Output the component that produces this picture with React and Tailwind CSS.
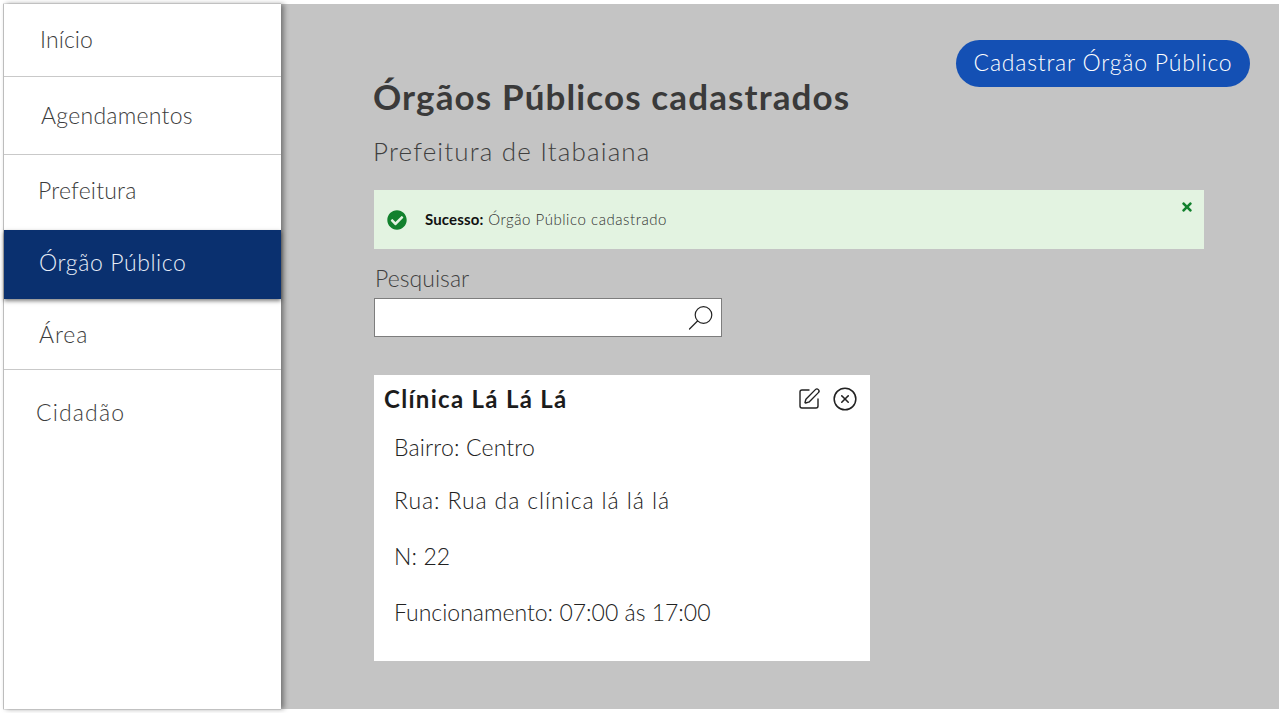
import { CircleX, SquarePen } from "lucide-react";
import { FaCheckCircle, FaTimes } from "react-icons/fa";

const font = "font-['Lato','Noto_Sans',sans-serif]";

function NavItem({ label, className = "" }) {
  return (
    <div className={`flex items-center border-b border-[#c9c9c9] text-[23px] font-light text-[#3c3c3c] ${className}`}>
      {label}
    </div>
  );
}

function CardLine({ children, className = "" }) {
  return <p className={`text-[23px] font-light leading-[28px] text-[#222] ${className}`}>{children}</p>;
}

function SearchMark() {
  return (
    <svg viewBox="0 0 26 26" className="h-[26px] w-[26px] text-[#222]" fill="none" stroke="currentColor" strokeWidth="1.2" strokeLinecap="round">
      <circle cx="15.5" cy="10" r="8.3" />
      <path d="M9.5 16 1.5 24" />
    </svg>
  );
}

export default function App() {
  return (
    <div className={`flex h-[713px] w-[1279px] overflow-hidden bg-white pb-[4px] pt-[4px] pl-[3px] ${font}`}>
      {/* Sidebar */}
      <aside className="relative z-10 flex w-[278px] shrink-0 flex-col border-l border-[#bdbdbd] bg-white shadow-[3px_0_5px_rgba(0,0,0,0.4),0_-1px_0_#e8e8e8,0_1px_0_#e8e8e8]">
        <NavItem label="Início" className="h-[73px] pl-[36px] pb-[1px] tracking-[0.1px]" />
        <NavItem label="Agendamentos" className="h-[78px] pl-[37px] pb-[1px] tracking-[0.27px]" />
        <div className="flex h-[75px] items-center pl-[34px] pb-[5px] text-[23px] font-light tracking-[0.2px] text-[#3c3c3c]">Prefeitura</div>
        <div className="z-10 flex h-[69px] items-center bg-[#0a306f] pl-[35px] pb-[4px] text-[23px] font-light tracking-[0.6px] text-[#e8eef8] shadow-[0_2px_4px_rgba(0,0,0,0.5)]">
          Órgão Público
        </div>
        <NavItem label="Área" className="h-[71px] pl-[35px] pt-[1px] tracking-[0.9px]" />
        <div className="pl-[32px] pt-[28px] text-[23px] font-light leading-[28px] tracking-[1.15px] text-[#3c3c3c]">Cidadão</div>
      </aside>

      {/* Main */}
      <main className="flex flex-1 flex-col bg-[#c4c4c4] pl-[92px]">
        <div className="flex items-start justify-between pr-[29px]">
          <div className="pt-[69px]">
            <h1 className="text-[35px] font-bold leading-[46px] tracking-[1.12px] text-[#3a3a3a]">Órgãos Públicos cadastrados</h1>
            <p className="mt-[17px] text-[26px] font-light leading-[30px] tracking-[1.15px] text-[#3f3f3f]">Prefeitura de Itabaiana</p>
          </div>
          <button className="mt-[36px] flex h-[47px] w-[294px] items-center justify-center rounded-full bg-[#1450b4] pb-[2px] text-[23px] font-light tracking-[0.79px] text-white">
            Cadastrar Órgão Público
          </button>
        </div>

        {/* Alerta */}
        <div className="relative ml-[1px] mt-[24px] flex h-[59px] w-[830px] items-center bg-[#e3f3e1] pl-[13px]">
          <FaCheckCircle className="h-[20px] w-[20px] text-[#12812d]" />
          <span className="ml-[18px] text-[15px] font-light tracking-[0.55px] text-[#2f2f2f]">
            <b className="font-bold tracking-[0.15px] text-[#111]">Sucesso:</b> Órgão Público cadastrado
          </span>
          <FaTimes className="absolute right-[10px] top-[10px] h-[14px] w-[14px] text-[#12812d]" />
        </div>

        {/* Pesquisa */}
        <label className="ml-[2px] mt-[15px] text-[23px] font-light leading-[28px] tracking-[0.05px] text-[#3f3f3f]">Pesquisar</label>
        <div className="ml-[1px] mt-[6px] flex h-[39px] w-[348px] items-center justify-end border border-[#7d7d7d] bg-white pr-[7px]">
          <SearchMark />
        </div>

        {/* Card */}
        <section className="ml-[1px] mt-[38px] h-[286px] w-[496px] bg-white">
          <div className="flex items-center justify-between pl-[10px] pr-[12px] pt-[8px]">
            <h2 className="text-[24px] font-bold leading-[32px] tracking-[1.3px] text-[#1c1c1c]">Clínica Lá Lá Lá</h2>
            <div className="flex items-center gap-[11px]">
              <SquarePen className="h-[24px] w-[24px] text-[#222]" strokeWidth={1.4} />
              <CircleX className="h-[26px] w-[26px] text-[#222]" strokeWidth={1.4} />
            </div>
          </div>
          <div className="pl-[20px]">
            <CardLine className="mt-[18px] tracking-[0.15px]">Bairro: Centro</CardLine>
            <CardLine className="mt-[25px] tracking-[0.9px]">Rua: Rua da clínica lá lá lá</CardLine>
            <CardLine className="mt-[28px] tracking-[0.1px]">N: 22</CardLine>
            <CardLine className="mt-[28px] tracking-[0px]">Funcionamento: 07:00 ás 17:00</CardLine>
          </div>
        </section>
      </main>
    </div>
  );
}
